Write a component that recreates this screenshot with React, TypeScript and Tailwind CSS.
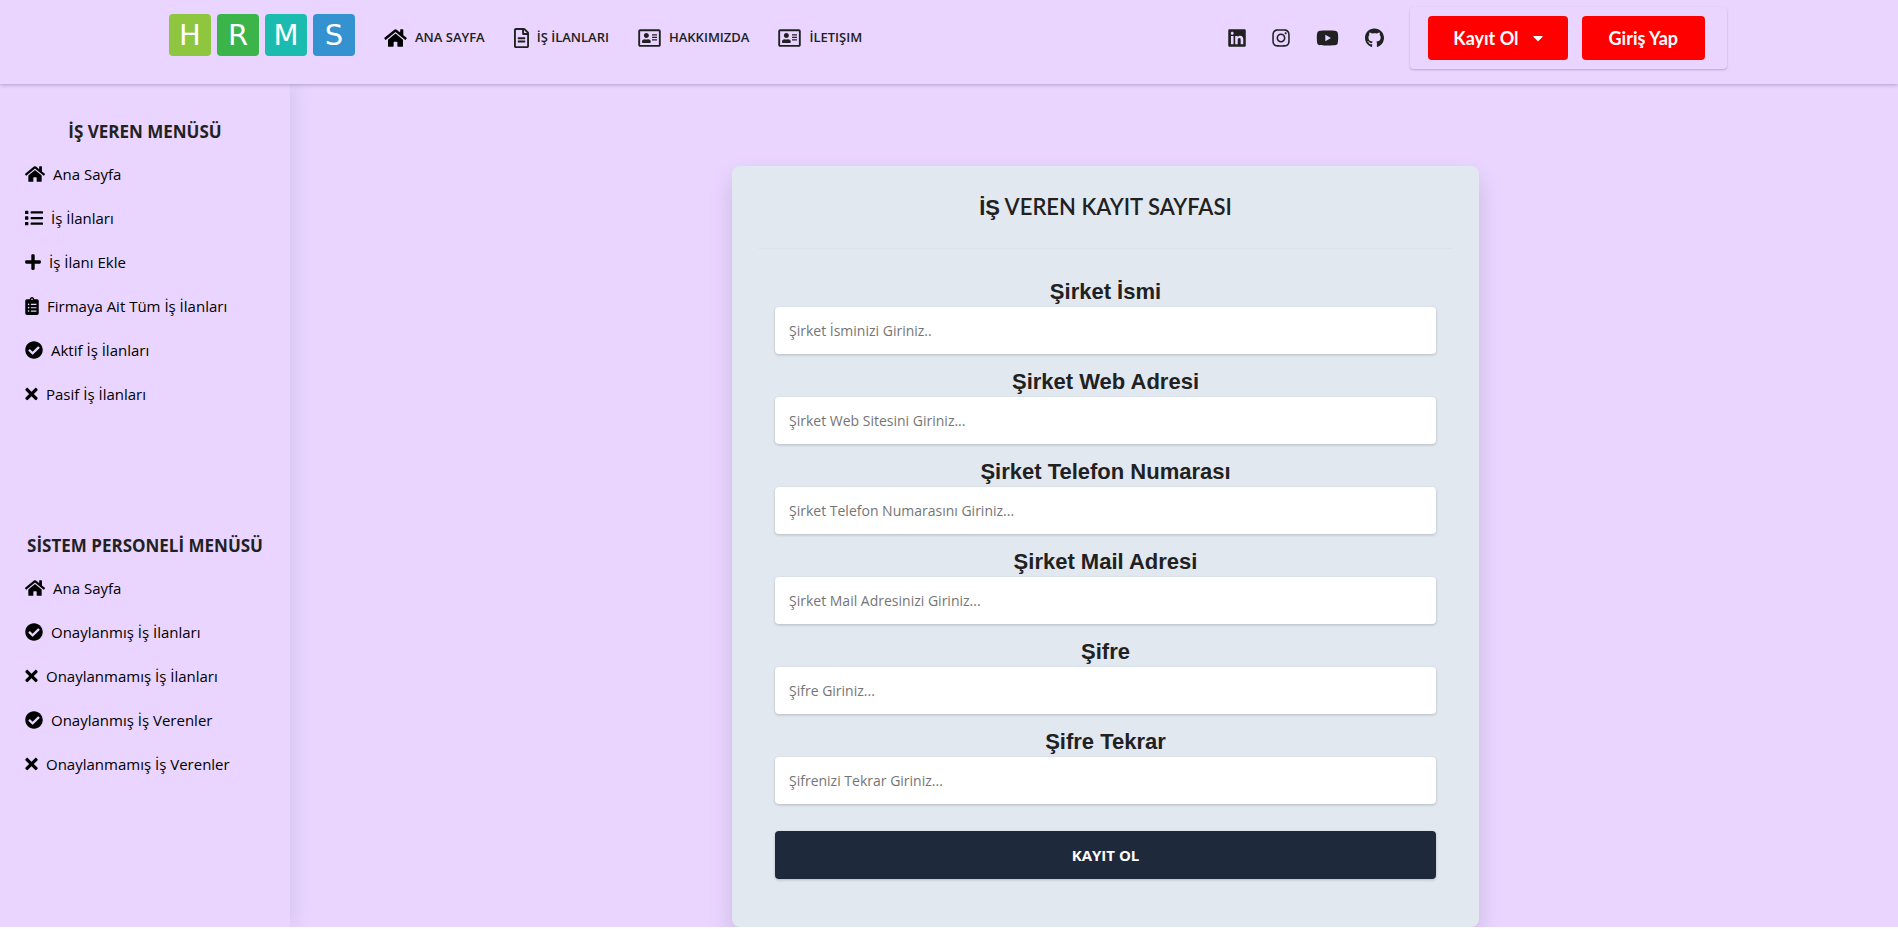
import type { IconType } from "react-icons";
import {
  FaCaretDown,
  FaCheckCircle,
  FaClipboardList,
  FaGithub,
  FaHome,
  FaInstagram,
  FaLinkedin,
  FaList,
  FaPlus,
  FaRegAddressCard,
  FaRegFileAlt,
  FaTimes,
  FaYoutube,
} from "react-icons/fa";

type LinkItem = { label: string; icon: IconType; size: string };

const logoTiles = [
  { letter: "H", color: "bg-[#8ec640]" },
  { letter: "R", color: "bg-[#3bb44a]" },
  { letter: "M", color: "bg-[#1cbbb0]" },
  { letter: "S", color: "bg-[#3492d1]" },
];

const navItems: LinkItem[] = [
  { label: "ANA SAYFA", icon: FaHome, size: "w-[23px] text-black" },
  { label: "İŞ İLANLARI", icon: FaRegFileAlt, size: "w-[15px]" },
  { label: "HAKKIMIZDA", icon: FaRegAddressCard, size: "w-[23px]" },
  { label: "İLETIŞIM", icon: FaRegAddressCard, size: "w-[23px]" },
];

const socials: LinkItem[] = [
  { label: "LinkedIn", icon: FaLinkedin, size: "w-[18px]" },
  { label: "Instagram", icon: FaInstagram, size: "w-[18px]" },
  { label: "YouTube", icon: FaYoutube, size: "w-[23px]" },
  { label: "GitHub", icon: FaGithub, size: "w-[19px]" },
];

const employerMenu: LinkItem[] = [
  { label: "Ana Sayfa", icon: FaHome, size: "w-5" },
  { label: "İş İlanları", icon: FaList, size: "w-[18px]" },
  { label: "İş İlanı Ekle", icon: FaPlus, size: "w-4" },
  { label: "Firmaya Ait Tüm İş İlanları", icon: FaClipboardList, size: "w-3.5" },
  { label: "Aktif İş İlanları", icon: FaCheckCircle, size: "w-[18px]" },
  { label: "Pasif İş İlanları", icon: FaTimes, size: "w-[13px]" },
];

const staffMenu: LinkItem[] = [
  { label: "Ana Sayfa", icon: FaHome, size: "w-5" },
  { label: "Onaylanmış İş İlanları", icon: FaCheckCircle, size: "w-[18px]" },
  { label: "Onaylanmamış İş İlanları", icon: FaTimes, size: "w-[13px]" },
  { label: "Onaylanmış İş Verenler", icon: FaCheckCircle, size: "w-[18px]" },
  { label: "Onaylanmamış İş Verenler", icon: FaTimes, size: "w-[13px]" },
];

const fields = [
  { id: "companyName", label: "Şirket İsmi", placeholder: "Şirket İsminizi Giriniz..", type: "text" },
  { id: "webAddress", label: "Şirket Web Adresi", placeholder: "Şirket Web Sitesini Giriniz...", type: "text" },
  { id: "phone", label: "Şirket Telefon Numarası", placeholder: "Şirket Telefon Numarasını Giriniz...", type: "tel" },
  { id: "email", label: "Şirket Mail Adresi", placeholder: "Şirket Mail Adresinizi Giriniz...", type: "email" },
  { id: "password", label: "Şifre", placeholder: "Şifre Giriniz...", type: "password" },
  { id: "passwordRepeat", label: "Şifre Tekrar", placeholder: "Şifrenizi Tekrar Giriniz...", type: "password" },
];

function Header() {
  return (
    <header className="relative z-10 h-[84px] bg-[#e9d5ff] shadow-[0_1px_4px_rgba(0,0,0,0.25)]">
      <div className="mx-auto flex max-w-[1560px] items-start pr-0.5">
        <a href="#" aria-label="HRMS" className="flex gap-1.5 pt-3.5">
          {logoTiles.map((tile) => (
            <span
              key={tile.letter}
              className={`flex size-[42px] items-center justify-center rounded font-['DejaVu_Sans',sans-serif] text-[29px] leading-none text-white ${tile.color}`}
            >
              {tile.letter}
            </span>
          ))}
        </a>
        <nav className="flex h-[76px] items-center gap-[29px] pl-[29px] text-[13px] font-semibold">
          {navItems.map(({ label, icon: Icon, size }) => (
            <a key={label} href="#" className="flex items-center gap-2 whitespace-nowrap">
              <Icon className={`h-5 ${size}`} />
              {label}
            </a>
          ))}
        </nav>
        <div className="ml-auto flex items-start">
          <div className="flex h-[76px] items-center gap-[26px] pr-[26px]">
            {socials.map(({ label, icon: Icon, size }) => (
              <a key={label} href="#" aria-label={label}>
                <Icon className={`h-5 ${size}`} />
              </a>
            ))}
          </div>
          <div className="mt-[7px] flex gap-3.5 rounded py-[9px] pr-[22px] pl-[18px] font-[Lato,sans-serif] text-lg font-bold text-white shadow-[0_1px_2px_rgba(34,36,38,0.25)]">
            <button type="button" className="flex h-11 items-center gap-[11px] rounded bg-[red] pr-[22px] pl-[25px]">
              Kayıt Ol
              <FaCaretDown className="size-4" />
            </button>
            <button type="button" className="h-11 rounded bg-[red] px-[27px]">
              Giriş Yap
            </button>
          </div>
        </div>
      </div>
    </header>
  );
}

function SideMenu({ title, items }: { title: string; items: LinkItem[] }) {
  return (
    <section>
      <h2 className="text-center text-[17px] leading-6 font-bold whitespace-nowrap">{title}</h2>
      <ul className="pt-2 text-[15px] text-black">
        {items.map(({ label, icon: Icon, size }) => (
          <li key={label}>
            <a href="#" className="flex h-11 items-center gap-2 whitespace-nowrap">
              <Icon className={`h-[18px] ${size}`} />
              {label}
            </a>
          </li>
        ))}
      </ul>
    </section>
  );
}

function RegisterForm() {
  return (
    <form className="w-full max-w-[747px] rounded-lg bg-[#e2e8f0] px-[26px] pt-[27px] pb-12 shadow-[0_12px_25px_rgba(0,0,0,0.13)]">
      <h1 className="border-b border-[#e0e1ea] pb-[26px] text-center font-[Lato,sans-serif] text-[22px] leading-7 font-semibold">
        <span className="font-['Liberation_Sans',sans-serif]">İŞ</span> VEREN KAYIT SAYFASI
      </h1>
      <div className="flex flex-col gap-3 px-[17px] pt-[27px]">
        {fields.map((field) => (
          <div key={field.id} className="flex flex-col">
            <label
              htmlFor={field.id}
              className="text-center font-['Liberation_Sans',sans-serif] text-[22px] leading-[31px] font-bold"
            >
              {field.label}
            </label>
            <input
              id={field.id}
              type={field.type}
              placeholder={field.placeholder}
              className="h-[47px] w-full rounded bg-white px-3.5 text-sm shadow-[0_1px_3px_rgba(0,0,0,0.2)] outline-none placeholder:text-[#757575]"
            />
          </div>
        ))}
        <button
          type="submit"
          className="mt-[15px] h-12 w-full rounded bg-[#1e293b] text-[15px] font-bold text-white shadow-[0_1px_3px_rgba(0,0,0,0.2)]"
        >
          KAYIT OL
        </button>
      </div>
    </form>
  );
}

export default function App() {
  return (
    <div className="overflow-hidden bg-[#e9d5ff] font-['Open_Sans','Noto_Sans',sans-serif] text-[#212121]">
      <Header />
      <div className="flex">
        <aside className="flex w-[290px] shrink-0 flex-col gap-[118px] px-[25px] pt-9 shadow-[4px_0_20px_rgba(0,0,0,0.08)]">
          <SideMenu title="İŞ VEREN MENÜSÜ" items={employerMenu} />
          <SideMenu title="SİSTEM PERSONELİ MENÜSÜ" items={staffMenu} />
        </aside>
        <main className="flex flex-1 justify-center pt-[82px] pl-[23px]">
          <RegisterForm />
        </main>
      </div>
    </div>
  );
}
